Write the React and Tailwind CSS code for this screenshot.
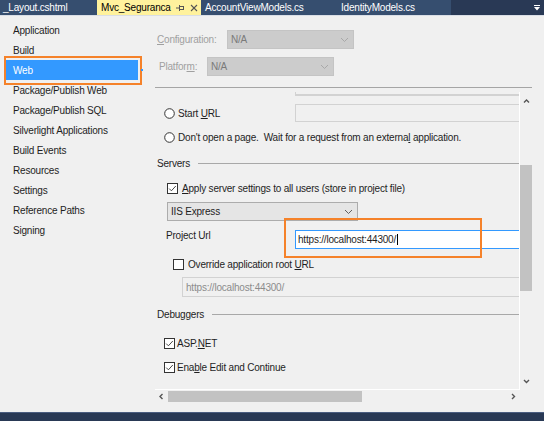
import React from "react";

const U = ({ children }) => <span className="underline underline-offset-[1px]">{children}</span>;

function CheckBox({ checked }) {
  return (
    <svg width="11" height="11" viewBox="0 0 11 11" className="shrink-0 block">
      <rect x="0.5" y="0.5" width="10" height="10" fill="#ffffff" stroke="#333333" />
      {checked && <polyline points="2.2,5.6 4.4,7.8 8.8,3" fill="none" stroke="#333333" strokeWidth="0.9" />}
    </svg>
  );
}

function Radio() {
  return (
    <svg width="11" height="11" viewBox="0 0 11 11" className="shrink-0 block">
      <circle cx="5.5" cy="5.5" r="4.8" fill="#ffffff" stroke="#333333" />
    </svg>
  );
}

function Chevron({ color = "#606060" }) {
  return (
    <svg width="9" height="6" viewBox="0 0 9 6" className="block">
      <polyline points="1,1 4.5,4.5 8,1" fill="none" stroke={color} strokeWidth="1" />
    </svg>
  );
}

function Arrow({ dir }) {
  const pts = {
    up: "1,4.5 3.5,2 6,4.5",
    down: "1,2 3.5,4.5 6,2",
    left: "4.5,1 2,3.5 4.5,6",
    right: "2,1 4.5,3.5 2,6",
  }[dir];
  return (
    <svg width="7" height="7" viewBox="0 0 7 7" className="block">
      <polyline points={pts} fill="none" stroke="#555555" strokeWidth="1.4" />
    </svg>
  );
}

const navItems = [
  "Application",
  "Build",
  "Web",
  "Package/Publish Web",
  "Package/Publish SQL",
  "Silverlight Applications",
  "Build Events",
  "Resources",
  "Settings",
  "Reference Paths",
  "Signing",
];

export default function App() {
  return (
    <div className="relative w-[544px] h-[421px] overflow-hidden bg-[#f0f0f0] flex flex-col font-['Liberation_Sans',Arial,sans-serif] text-[10px] tracking-[-0.2px] text-[#1e1e1e]">
      {/* Tab bar */}
      <div className="h-[15px] shrink-0 bg-[#293955] flex items-stretch text-white leading-none">
        <div className="w-[97px] bg-[#364e6f] flex items-center pl-[3px]">_Layout.cshtml</div>
        <div className="w-[104px] bg-[#fff29d] text-black flex items-center pl-[4px]">
          <span className="w-[75px]">Mvc_Seguranca</span>
          <svg width="9" height="8" viewBox="0 0 9 8" className="block">
            <line x1="0" y1="4" x2="3" y2="4" stroke="#555" />
            <line x1="3.5" y1="1" x2="3.5" y2="7" stroke="#555" />
            <rect x="3.5" y="2.5" width="4" height="3" fill="none" stroke="#555" />
          </svg>
          <svg width="8" height="8" viewBox="0 0 8 8" className="block ml-[5px]">
            <line x1="1" y1="1" x2="7" y2="7" stroke="#555" strokeWidth="1.1" />
            <line x1="7" y1="1" x2="1" y2="7" stroke="#555" strokeWidth="1.1" />
          </svg>
        </div>
        <div className="w-[250px] bg-[#364e6f] flex items-center pl-[4px]">
          <span className="w-[136px]">AccountViewModels.cs</span>
          <span>IdentityModels.cs</span>
        </div>
        <div className="flex-1 flex items-center justify-end pr-[4px]">
          <svg width="6" height="6" viewBox="0 0 6 6" className="block">
            <line x1="0" y1="0.5" x2="6" y2="0.5" stroke="#ffffff" />
            <polygon points="0,2 6,2 3,5.5" fill="#ffffff" />
          </svg>
        </div>
      </div>
      <div className="h-px shrink-0 bg-[#d9dee6]" />

      {/* Main */}
      <div className="flex-1 flex min-h-0">
        {/* Left nav */}
        <div className="w-[155px] shrink-0 pt-[4px] flex flex-col">
          {navItems.map((n) => (
            <div
              key={n}
              className={
                n === "Web"
                  ? "h-[20px] ml-[6px] w-[132px] pl-[7px] flex items-center bg-[#3399ff] text-white"
                  : "h-[20px] ml-[6px] w-[132px] pl-[7px] flex items-center"
              }
            >
              {n}
            </div>
          ))}
        </div>

        {/* Right panel */}
        <div className="flex-1 flex flex-col pr-[12px] min-w-0">
          <div className="mt-[14px] h-[19px] flex items-center pl-[2px]">
            <span className="w-[70px] text-[#a0a0a0]">
              <U>C</U>onfiguration:
            </span>
            <div className="w-[127px] h-[19px] bg-[#cccccc] border border-[#c4c4c4] flex items-center pl-[3px] pr-[4px] text-[#7a7a7a]">
              <span className="flex-1">N/A</span>
              <Chevron color="#a8a8a8" />
            </div>
          </div>
          <div className="mt-[8px] h-[19px] flex items-center pl-[4px]">
            <span className="w-[48px] text-[#a0a0a0]">
              Platfor<U>m</U>:
            </span>
            <div className="w-[127px] h-[19px] bg-[#cccccc] border border-[#c4c4c4] flex items-center pl-[3px] pr-[4px] text-[#7a7a7a]">
              <span className="flex-1">N/A</span>
              <Chevron color="#a8a8a8" />
            </div>
          </div>
          <div className="mt-[11px] h-px bg-[#a5a5a5] shrink-0" />

          {/* Scroll region */}
          <div className="mt-[4px] flex flex-col">
            <div className="flex">
              <div className="w-[365px] h-[298px] overflow-hidden border-r border-b border-white flex flex-col">
                <div className="ml-[140px] h-[4px] shrink-0 border-l border-b-2 border-[#d2d2d2]" />
                <div className="mt-[8px] h-[18px] flex items-center shrink-0">
                  <div className="w-[140px] pl-[9px] flex items-center">
                    <Radio />
                    <span className="ml-[3px]">
                      Start <U>U</U>RL
                    </span>
                  </div>
                  <div className="flex-1 h-[18px] border border-[#d2d2d2] bg-[#f0f0f0] -mr-[2px]" />
                </div>
                <div className="mt-[7px] h-[16px] flex items-center pl-[9px] shrink-0 whitespace-nowrap">
                  <Radio />
                  <span className="ml-[3px]">
                    Don't open a page.&nbsp; Wait for a request from an externa<U>l</U> application.
                  </span>
                </div>
                <div className="mt-[12px] h-[12px] flex items-center pl-[2px] shrink-0">
                  <span>Servers</span>
                  <div className="flex-1 ml-[8px] h-px bg-[#a8a8a8]" />
                </div>
                <div className="mt-[13px] h-[12px] flex items-center pl-[12px] shrink-0 whitespace-nowrap">
                  <CheckBox checked />
                  <span className="ml-[4px]">
                    <U>A</U>pply server settings to all users (store in project file)
                  </span>
                </div>
                <div className="mt-[8px] ml-[12px] w-[191px] h-[19px] shrink-0 bg-[#e5e5e5] border border-[#acacac] flex items-center pl-[3px] pr-[4px]">
                  <span className="flex-1">IIS Express</span>
                  <Chevron />
                </div>
                <div className="mt-[9px] h-[19px] flex items-start shrink-0">
                  <div className="w-[140px] pl-[11px] h-[12px] leading-[12px]">
                    Pro<U>j</U>ect Url
                  </div>
                  <div className="flex-1 h-[19px] bg-white border border-[#3399ff] flex items-center pl-[2px] -mr-[2px] whitespace-nowrap">
                    <span>https://localhost:44300/</span>
                    <span className="ml-[1px] w-px h-[11px] bg-black" />
                  </div>
                </div>
                <div className="mt-[9px] h-[12px] flex items-center pl-[18px] shrink-0 whitespace-nowrap">
                  <CheckBox />
                  <span className="ml-[4px]">
                    Override application root <U>U</U>RL
                  </span>
                </div>
                <div className="mt-[7px] ml-[27px] h-[20px] shrink-0 border border-[#d2d2d2] bg-[#f0f0f0] -mr-[2px] flex items-center pl-[3px] text-[#8c8c8c]">
                  https://localhost:44300/
                </div>
                <div className="mt-[11px] h-[12px] flex items-center pl-[2px] shrink-0">
                  <span>Debuggers</span>
                  <div className="flex-1 ml-[8px] h-px bg-[#a8a8a8]" />
                </div>
                <div className="mt-[17px] h-[12px] flex items-center pl-[9px] shrink-0">
                  <CheckBox checked />
                  <span className="ml-[2px]">
                    ASP.<U>N</U>ET
                  </span>
                </div>
                <div className="mt-[12px] h-[12px] flex items-center pl-[9px] shrink-0">
                  <CheckBox checked />
                  <span className="ml-[2px]">
                    Ena<U>b</U>le Edit and Continue
                  </span>
                </div>
              </div>
              {/* vertical scrollbar */}
              <div className="w-[12px] h-[298px] pt-[1px] flex flex-col items-stretch">
                <div className="h-[17px] flex items-center justify-center">
                  <Arrow dir="up" />
                </div>
                <div className="mt-[55px] h-[126px] bg-[#c2c2c2]" />
                <div className="flex-1" />
                <div className="h-[17px] flex items-center justify-center">
                  <Arrow dir="down" />
                </div>
              </div>
            </div>
            {/* horizontal scrollbar */}
            <div className="w-[365px] h-[13px] flex items-stretch">
              <div className="w-[13px] flex items-center justify-center">
                <Arrow dir="left" />
              </div>
              <div className="w-[194px] my-[1px] bg-[#c2c2c2]" />
              <div className="flex-1" />
              <div className="w-[13px] flex items-center justify-center">
                <Arrow dir="right" />
              </div>
            </div>
          </div>
        </div>
      </div>

      {/* Bottom bar */}
      <div className="h-[9px] shrink-0 bg-[#293955] border-t border-[#4a5d80]" />

      {/* Annotation overlays */}
      <div className="absolute left-[4px] top-[56px] w-[138px] h-[29px] border-2 border-[#f5822a] pointer-events-none" />
      <div className="absolute left-[284px] top-[218px] w-[198px] h-[40px] border-2 border-[#f5822a] pointer-events-none" />
      <div className="absolute left-[141px] top-[69px] w-[2px] h-[2px] bg-[#3399ff]" />
    </div>
  );
}
